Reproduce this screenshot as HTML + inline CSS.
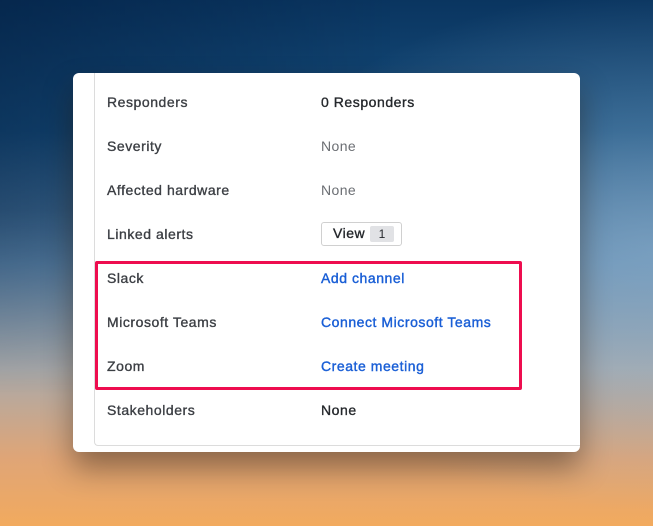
<!DOCTYPE html>
<html><head><style>
html,body{margin:0;width:653px;height:526px;overflow:hidden}
body{position:relative;font-family:"Liberation Sans",sans-serif;
background:
radial-gradient(ellipse 420px 260px at 660px 250px,rgba(140,175,205,0.6),transparent),
linear-gradient(180deg,#0a3560 0%,#174f7e 25%,#5f89ad 50%,#a9aaab 70%,#dfa577 87%,#f2aa5e 100%);}
.bgl{position:absolute;inset:0;background:linear-gradient(180deg,rgba(0,0,0,0) 0%,rgba(0,0,0,0) 100%),linear-gradient(90deg,rgba(0,20,50,0.4),rgba(0,0,0,0) 60%);-webkit-mask:linear-gradient(180deg,#000 0%,#000 40%,transparent 75%)}
.card{position:absolute;left:73px;top:73px;width:507px;height:379px;background:#fff;border-radius:6px;box-shadow:0 16px 30px rgba(40,25,10,0.45);overflow:hidden}
.inner{position:absolute;left:21px;top:-5px;width:500px;height:377px;border-left:1px solid #dcdcdc;border-bottom:1px solid #dcdcdc;border-radius:0 0 0 4px}
.row{position:absolute;left:34px;font-size:14px;color:#3c3f44;letter-spacing:0.55px;line-height:18px;-webkit-text-stroke:0.35px #3c3f44}
.row span{position:absolute;left:214px;white-space:nowrap;color:#25282c;-webkit-text-stroke:0.35px #25282c}
.g{color:#6b6e73!important;-webkit-text-stroke:0!important;letter-spacing:0.4px}
.b{color:#1a5fd6!important;-webkit-text-stroke:0.4px #1a5fd6!important}
.red{position:absolute;left:22px;top:188px;width:421px;height:123px;border:3px solid #ee0d4f;border-radius:2px}
.btn{position:absolute;left:248px;top:149px;width:79px;height:22px;border:1px solid #d0d0d0;border-radius:3px;font-size:14px;color:#25282c}
.btn b{position:absolute;left:11px;top:2px;font-weight:normal;letter-spacing:0.5px;-webkit-text-stroke:0.35px #25282c}
.btn i{position:absolute;left:48px;top:3px;width:24px;height:16px;background:#e1e2e5;border-radius:2px;font-style:normal;font-size:12px;text-align:center;line-height:16px}
</style></head><body><div class="bgl"></div>
<div class="card"><div class="inner"></div>
<div class="row" style="top:20px;width:440px">Responders<span>0 Responders</span></div>
<div class="row" style="top:64px;width:440px">Severity<span class="g">None</span></div>
<div class="row" style="top:108px;width:440px">Affected hardware<span class="g">None</span></div>
<div class="row" style="top:152px;width:440px">Linked alerts</div>
<div class="btn"><b>View</b><i>1</i></div>
<div class="red"></div>
<div class="row" style="top:196px;width:440px">Slack<span class="b">Add channel</span></div>
<div class="row" style="top:240px;width:440px">Microsoft Teams<span class="b">Connect Microsoft Teams</span></div>
<div class="row" style="top:284px;width:440px">Zoom<span class="b">Create meeting</span></div>
<div class="row" style="top:328px;width:440px">Stakeholders<span>None</span></div>
</div>
</body></html>
